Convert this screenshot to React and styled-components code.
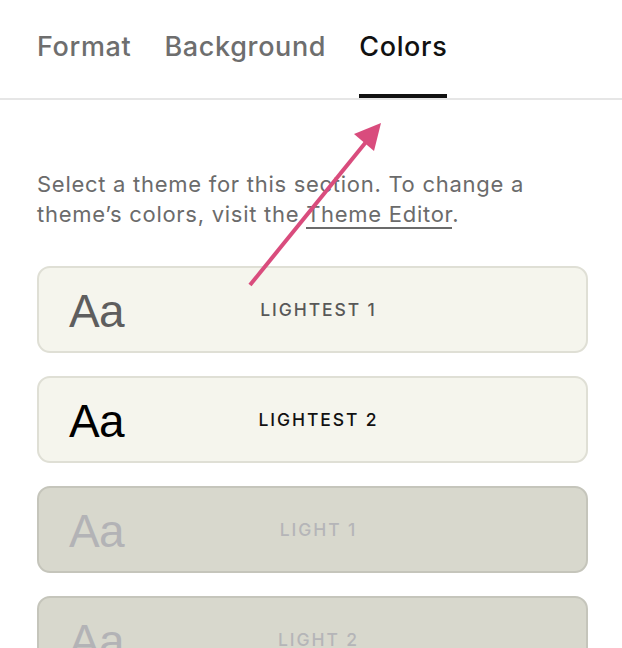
import React from 'react'
import styled, { createGlobalStyle } from 'styled-components'

const GlobalStyle = createGlobalStyle`
  html, body {
    margin: 0;
    padding: 0;
    background: #ffffff;
  }
  body {
    font-family: Inter, "Liberation Sans", sans-serif;
    -webkit-font-smoothing: antialiased;
  }
`

const Panel = styled.div`
  position: relative;
  width: 622px;
  height: 648px;
  overflow: hidden;
  background: #fff;
`

const Tabs = styled.nav`
  display: flex;
  gap: 33px;
  padding: 0 37px;
  height: 100px;
  border-bottom: 2px solid #e6e6e6;
  box-sizing: border-box;
`

const Tab = styled.div`
  display: flex;
  align-items: center;
  height: 100%;
  padding-bottom: 2px;
  box-sizing: border-box;
  font-size: 27px;
  font-weight: 500;
  letter-spacing: 0.65px;
  color: ${p => (p.$active ? '#111111' : '#6e6e6e')};
  border-bottom: 4px solid ${p => (p.$active ? '#111111' : 'transparent')};
  margin-bottom: -2px;
`

const Body = styled.div`
  padding: 69px 30px 0 37px;
`

const Intro = styled.p`
  max-width: 551px;
  margin: 0 0 37px;
  font-size: 22px;
  line-height: 30px;
  color: #6b6b6b;
  letter-spacing: 0.72px;
`

const EditorLink = styled.a`
  color: #6b6b6b;
  text-decoration: none;
  border-bottom: 2px solid #6b6b6b;
`

const ThemeList = styled.div`
  display: flex;
  flex-direction: column;
  gap: 23px;
`

const ThemeCard = styled.div`
  display: grid;
  grid-template-columns: 1fr auto 1fr;
  align-items: center;
  width: 551px;
  height: 87px;
  padding: 0 18px 0 30px;
  box-sizing: border-box;
  border-radius: 13px;
  background: ${p => (p.$muted ? '#d8d8cd' : '#f5f5ed')};
  border: 2px solid ${p => (p.$muted ? '#c5c5bb' : '#dfdfd5')};
`

const Sample = styled.span`
  justify-self: start;
  font-family: "Liberation Sans", Arial, sans-serif;
  font-size: 46px;
  line-height: 1;
  color: ${p => p.$color};
  letter-spacing: -0.8px;
  padding-top: 2px;
`

const Label = styled.span`
  font-size: 17.5px;
  font-weight: 500;
  letter-spacing: 1.9px;
  color: ${p => p.$color};
`

const Pointer = styled.svg`
  position: absolute;
  left: 0;
  top: 0;
  pointer-events: none;
`

const themes = [
  { name: 'LIGHTEST 1', sample: '#5e5e5e', label: '#585858' },
  { name: 'LIGHTEST 2', sample: '#000000', label: '#111111' },
  { name: 'LIGHT 1', sample: '#b3b3b6', label: '#b5b5b8', muted: true },
  { name: 'LIGHT 2', sample: '#b3b3b6', label: '#b5b5b8', muted: true },
]

export default function App() {
  return (
    <Panel>
      <GlobalStyle />
      <Tabs>
        <Tab>Format</Tab>
        <Tab>Background</Tab>
        <Tab $active>Colors</Tab>
      </Tabs>
      <Body>
        <Intro>
          Select a theme for this section. To change a theme’s colors, visit the{' '}
          <EditorLink href="#">Theme Editor</EditorLink>.
        </Intro>
        <ThemeList>
          {themes.map(t => (
            <ThemeCard key={t.name} $muted={t.muted}>
              <Sample $color={t.sample}>Aa</Sample>
              <Label $color={t.label}>{t.name}</Label>
              <span />
            </ThemeCard>
          ))}
        </ThemeList>
      </Body>
      <Pointer width="622" height="648" viewBox="0 0 622 648">
        <line x1="250" y1="285" x2="366" y2="142" stroke="#d94c7d" strokeWidth="4" strokeLinecap="butt" />
        <polygon points="381,123 354,134 374,151" fill="#d94c7d" />
      </Pointer>
    </Panel>
  )
}
